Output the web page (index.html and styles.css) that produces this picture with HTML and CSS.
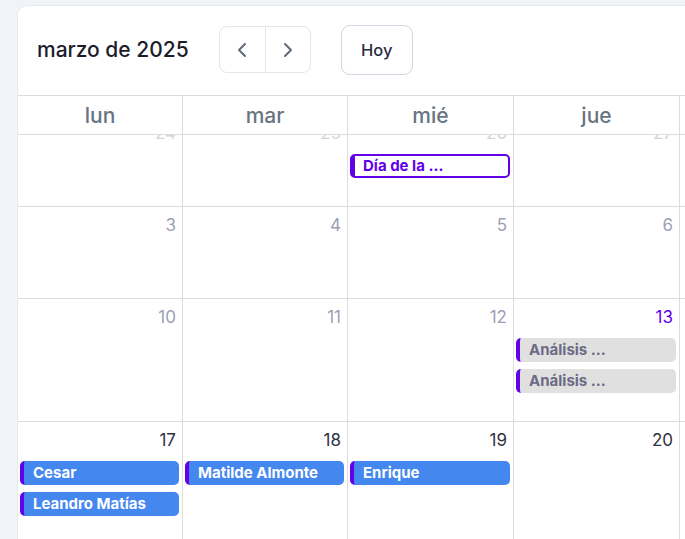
FILE: index.html
```html
<!DOCTYPE html>
<html lang="es">
<head>
<meta charset="utf-8">
<title>Calendario</title>
<link rel="stylesheet" href="styles.css">
</head>
<body>
<div class="card">
  <div class="toolbar">
    <h1 class="title">marzo de 2025</h1>
    <div class="nav">
      <button class="nav-btn" aria-label="Anterior">
        <svg width="10" height="16" viewBox="0 0 10 16"><path d="M8 2 L2 8 L8 14" fill="none" stroke="#5f6b7a" stroke-width="2" stroke-linecap="round" stroke-linejoin="round"/></svg>
      </button>
      <button class="nav-btn" aria-label="Siguiente">
        <svg width="10" height="16" viewBox="0 0 10 16"><path d="M2 2 L8 8 L2 14" fill="none" stroke="#5f6b7a" stroke-width="2" stroke-linecap="round" stroke-linejoin="round"/></svg>
      </button>
    </div>
    <button class="today-btn">Hoy</button>
  </div>

  <div class="grid head">
    <div class="dow">lun</div>
    <div class="dow">mar</div>
    <div class="dow">mié</div>
    <div class="dow">jue</div>
    <div class="dow">vie</div>
    <div class="dow">sáb</div>
    <div class="dow">dom</div>
  </div>

  <div class="viewport">
    <div class="weeks">
      <div class="grid week">
        <div class="cell"><div class="num other">24</div></div>
        <div class="cell"><div class="num other">25</div></div>
        <div class="cell"><div class="num other">26</div>
          <div class="event outline">Día de la ...</div>
        </div>
        <div class="cell"><div class="num other">27</div></div>
        <div class="cell"><div class="num other">28</div></div>
        <div class="cell"><div class="num past">1</div></div>
        <div class="cell"><div class="num past">2</div></div>
      </div>
      <div class="grid week">
        <div class="cell"><div class="num past">3</div></div>
        <div class="cell"><div class="num past">4</div></div>
        <div class="cell"><div class="num past">5</div></div>
        <div class="cell"><div class="num past">6</div></div>
        <div class="cell"><div class="num past">7</div></div>
        <div class="cell"><div class="num past">8</div></div>
        <div class="cell"><div class="num past">9</div></div>
      </div>
      <div class="grid week">
        <div class="cell"><div class="num past">10</div></div>
        <div class="cell"><div class="num past">11</div></div>
        <div class="cell"><div class="num past">12</div></div>
        <div class="cell"><div class="num today">13</div>
          <div class="event gray">Análisis ...</div>
          <div class="event gray">Análisis ...</div>
        </div>
        <div class="cell"><div class="num">14</div></div>
        <div class="cell"><div class="num">15</div></div>
        <div class="cell"><div class="num">16</div></div>
      </div>
      <div class="grid week">
        <div class="cell"><div class="num">17</div>
          <div class="event blue">Cesar</div>
          <div class="event blue">Leandro Matías</div>
        </div>
        <div class="cell"><div class="num">18</div>
          <div class="event blue">Matilde Almonte</div>
        </div>
        <div class="cell"><div class="num">19</div>
          <div class="event blue">Enrique</div>
        </div>
        <div class="cell"><div class="num">20</div></div>
        <div class="cell"><div class="num">21</div></div>
        <div class="cell"><div class="num">22</div></div>
        <div class="cell"><div class="num">23</div></div>
      </div>
    </div>
  </div>
</div>
</body>
</html>
```

FILE: styles.css
```css
* { box-sizing: border-box; }

html, body {
  margin: 0;
  padding: 0;
  height: 100%;
  overflow: hidden;
}

body {
  background: #f0f4f8;
  font-family: Inter, "Noto Sans", sans-serif;
  padding: 5px 0 0 17px;
}

.card {
  width: 1180px;
  height: 560px;
  background: #ffffff;
  border: 1px solid #e6e9ef;
  border-right: none;
  border-bottom: none;
  border-top-left-radius: 10px;
  display: flex;
  flex-direction: column;
}

.toolbar {
  height: 89px;
  display: flex;
  align-items: center;
  padding: 0 0 2px 19px;
}

.title {
  margin: 0;
  font-size: 21px;
  font-weight: 500;
  color: #1c1d2b;
}

.nav {
  margin-left: 30px;
  display: flex;
  border: 1px solid #e3e6ec;
  border-radius: 8px;
  height: 47px;
}

.nav-btn {
  width: 45px;
  height: 45px;
  border: none;
  background: transparent;
  display: flex;
  align-items: center;
  justify-content: center;
  padding: 0;
}

.nav-btn + .nav-btn {
  border-left: 1px solid #e3e6ec;
}

.today-btn {
  margin-left: 30px;
  width: 72px;
  height: 50px;
  border: 1px solid #d3d4e2;
  border-radius: 9px;
  background: #ffffff;
  font-family: Inter, "Noto Sans", sans-serif;
  font-size: 16.5px;
  font-weight: 500;
  color: #2a2b45;
}

.grid {
  display: grid;
  grid-template-columns: 165px 165px 166px 166px 166px 166px 166px;
}

.head {
  border-top: 1px solid #dcdcdc;
  border-bottom: 1px solid #dcdcdc;
  height: 40px;
}

.dow {
  border-right: 1px solid #dcdcdc;
  text-align: center;
  font-size: 21px;
  font-weight: 500;
  color: #687482;
  line-height: 39px;
}

.viewport {
  flex: 1;
  overflow: hidden;
}

.weeks {
  margin-top: -20px;
}

.week {
  border-bottom: 1px solid #dcdcdc;
}

.cell {
  border-right: 1px solid #dcdcdc;
  min-height: 91px;
  padding: 6px 0 28px;
}

.num {
  text-align: right;
  padding-right: 6px;
  font-size: 17px;
  line-height: 24px;
  height: 24px;
  color: #2f3142;
  margin-bottom: 9px;
}

.num.other { color: #d3d5de; }
.num.past { color: #9ca0b6; }
.num.today { color: #6200ea; }

.event {
  height: 24px;
  margin: 0 3px 7px 2px;
  border-radius: 5px;
  border-left: 4px solid #6200ea;
  padding-left: 9px;
  font-size: 15px;
  font-weight: 700;
  line-height: 24px;
  white-space: nowrap;
  overflow: hidden;
}

.event:last-child { margin-bottom: 0; }

.event.outline {
  background: #ffffff;
  border: 2px solid #6200ea;
  border-left-width: 5px;
  line-height: 20px;
  color: #6200ea;
  padding-left: 8px;
}

.event.gray {
  background: #e0e0e0;
  color: #6b6b85;
}

.event.blue {
  background: #4487ee;
  color: #ffffff;
}
```
